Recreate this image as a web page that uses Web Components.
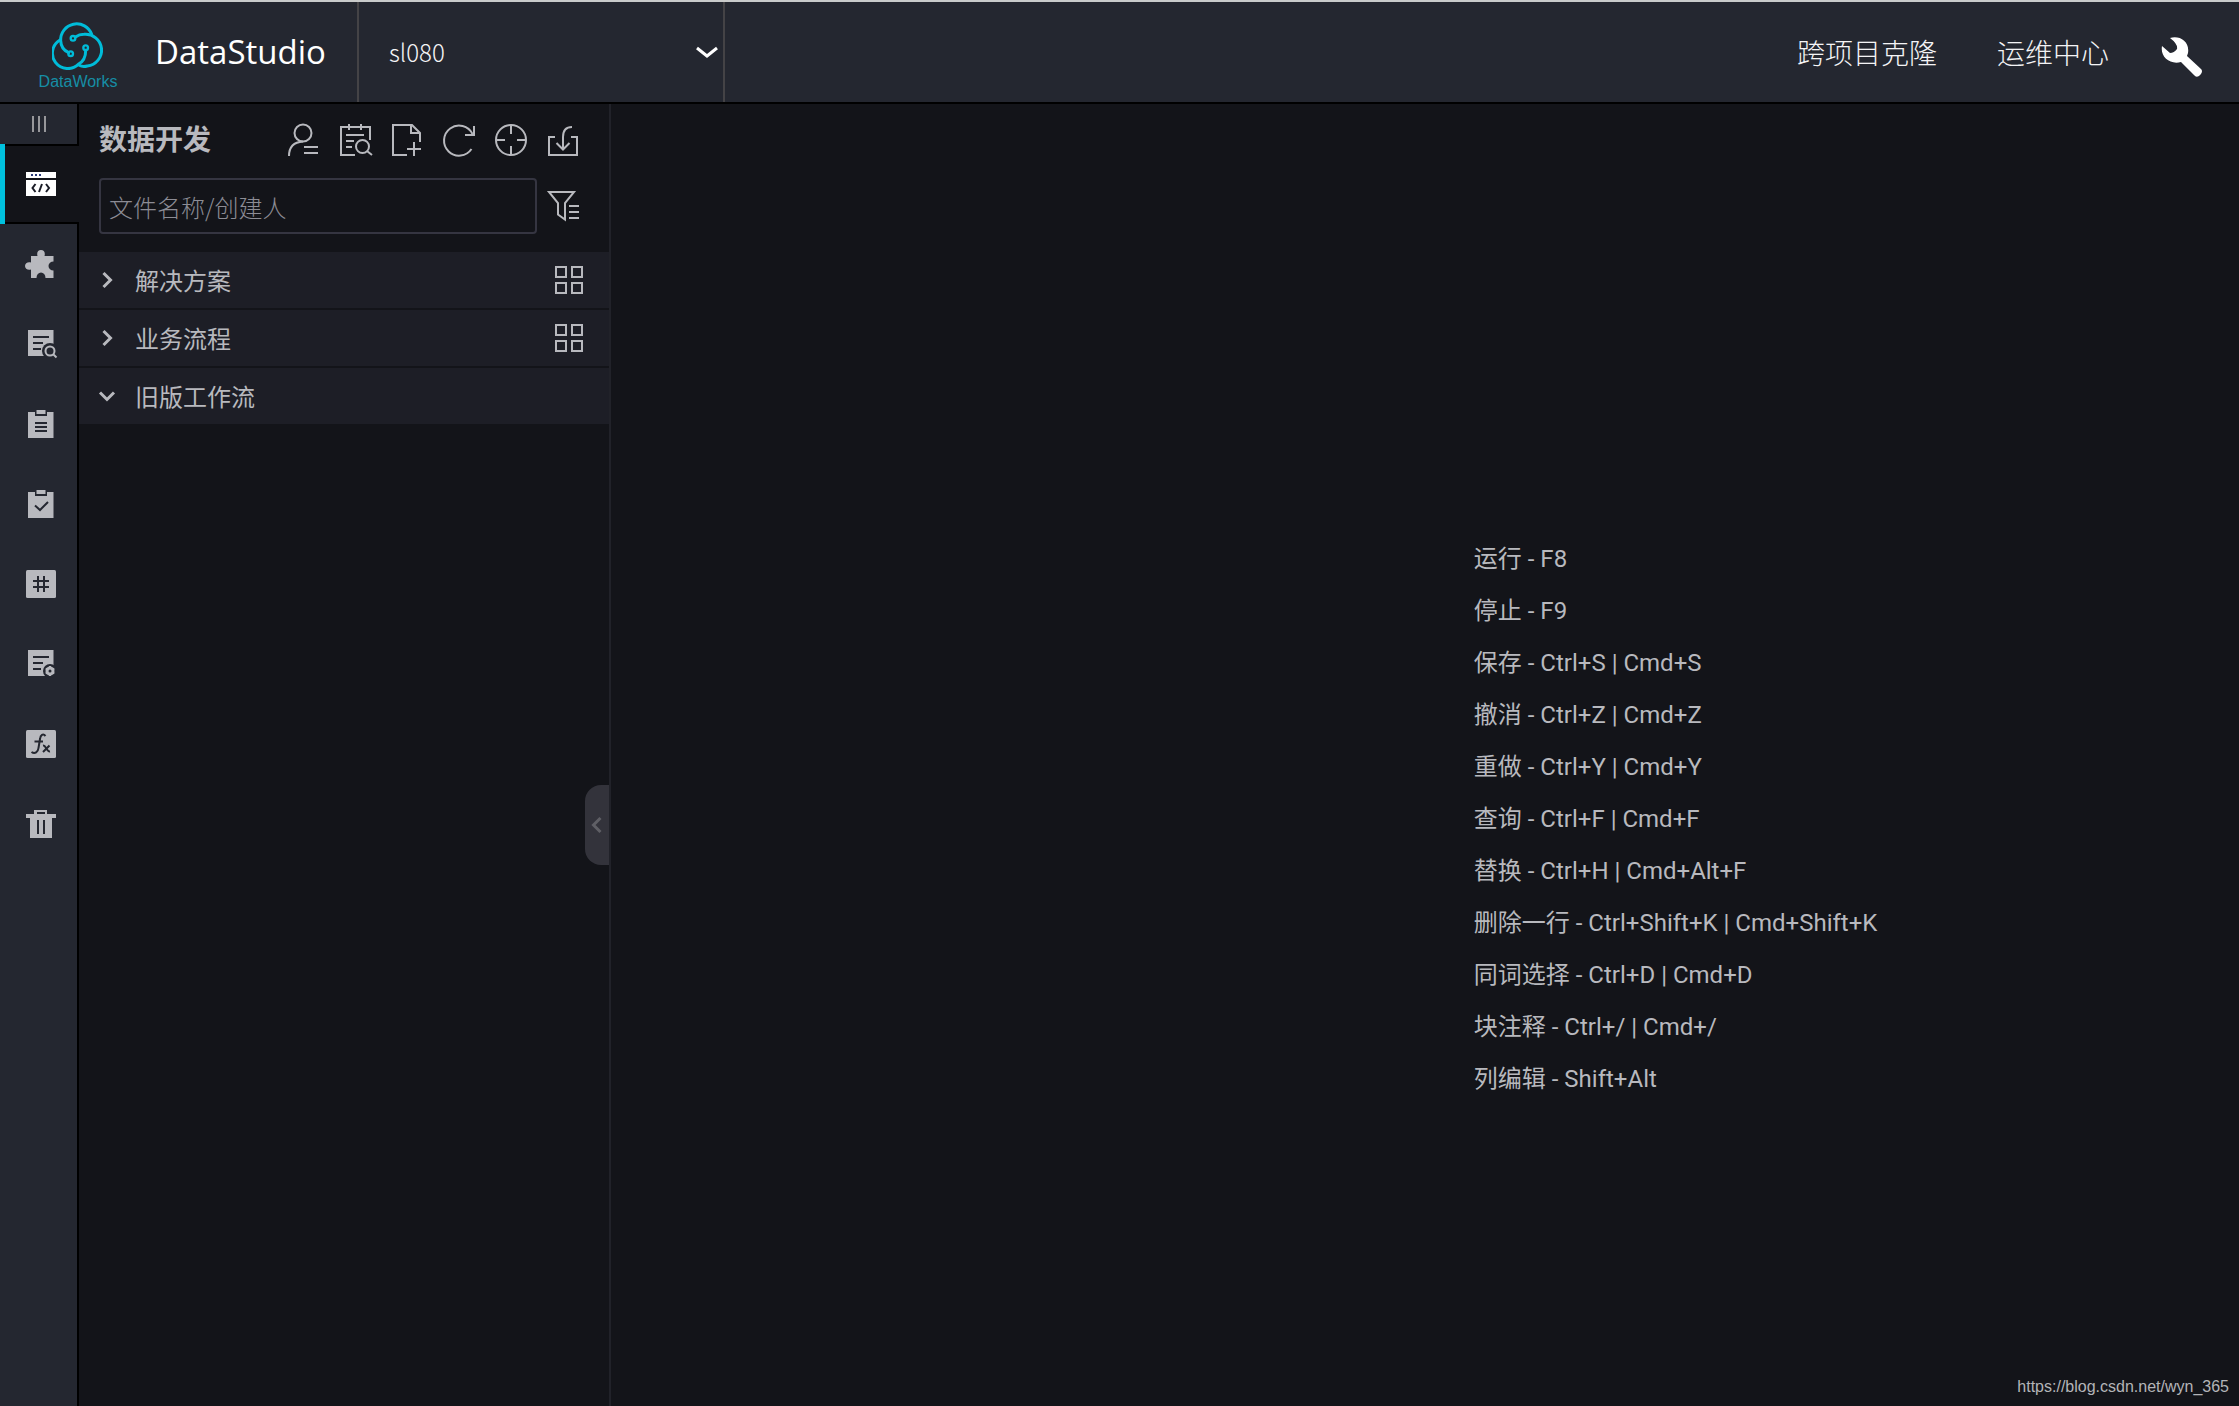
<!DOCTYPE html>
<html lang="zh-CN">
<head>
<meta charset="utf-8">
<title>DataStudio</title>
<style>
  html, body { margin: 0; background: #131419; }
  body {
    font-family: Roboto, "Noto Sans CJK SC", sans-serif;
    color: #b8b9be;
    --bar: #242730; --ground: #131419; --row: #1d1e26; --line: #000; --text: #b8b9be;
  }
</style>
</head>
<body>
<ds-app>
  <ds-header slot="header" product="DataStudio" project="sl080">
    <a href="#clone">跨项目克隆</a>
    <a href="#ops">运维中心</a>
  </ds-header>
  <ds-rail slot="rail">
    <ds-rail-item icon="code" label="数据开发" active></ds-rail-item>
    <ds-rail-item icon="puzzle" label="组件管理"></ds-rail-item>
    <ds-rail-item icon="docsearch" label="临时查询"></ds-rail-item>
    <ds-rail-item icon="clipboard" label="运行历史"></ds-rail-item>
    <ds-rail-item icon="check" label="手动业务流程"></ds-rail-item>
    <ds-rail-item icon="hash" label="公共表"></ds-rail-item>
    <ds-rail-item icon="docgear" label="表管理"></ds-rail-item>
    <ds-rail-item icon="fx" label="函数列表"></ds-rail-item>
    <ds-rail-item icon="trash" label="回收站"></ds-rail-item>
  </ds-rail>
  <ds-panel slot="panel" heading="数据开发">
    <ds-tree-row grid>解决方案</ds-tree-row>
    <ds-tree-row grid>业务流程</ds-tree-row>
    <ds-tree-row open>旧版工作流</ds-tree-row>
  </ds-panel>
  <ds-shortcuts>
    <ds-shortcut>运行 - F8</ds-shortcut>
    <ds-shortcut>停止 - F9</ds-shortcut>
    <ds-shortcut>保存 - Ctrl+S | Cmd+S</ds-shortcut>
    <ds-shortcut>撤消 - Ctrl+Z | Cmd+Z</ds-shortcut>
    <ds-shortcut>重做 - Ctrl+Y | Cmd+Y</ds-shortcut>
    <ds-shortcut>查询 - Ctrl+F | Cmd+F</ds-shortcut>
    <ds-shortcut>替换 - Ctrl+H | Cmd+Alt+F</ds-shortcut>
    <ds-shortcut>删除一行 - Ctrl+Shift+K | Cmd+Shift+K</ds-shortcut>
    <ds-shortcut>同词选择 - Ctrl+D | Cmd+D</ds-shortcut>
    <ds-shortcut>块注释 - Ctrl+/ | Cmd+/</ds-shortcut>
    <ds-shortcut>列编辑 - Shift+Alt</ds-shortcut>
  </ds-shortcuts>
  <span slot="credit">https://blog.csdn.net/wyn_365</span>
</ds-app>
<script>
const BG = '#242730';
const line = (d, w = 2) => `<path d="${d}" fill="none" stroke="currentColor" stroke-width="${w}"/>`;
const cut = (d, w = 2) => `<path d="${d}" fill="none" stroke="${BG}" stroke-width="${w}"/>`;
const ring = (x, y, r, w = 2) => `<circle cx="${x}" cy="${y}" r="${r}" fill="none" stroke="currentColor" stroke-width="${w}"/>`;
const hole = (x, y, r) => `<circle cx="${x}" cy="${y}" r="${r}" fill="${BG}"/>`;
const board = `<path d="M3 4H28.5V30H3Z" fill="currentColor"/><path d="M10 3H22V8H10Z" fill="${BG}"/><path d="M11.5 2H20.5V6H11.5Z" fill="currentColor"/>`;
const sheet = '<path d="M3 2H28.5V28H3Z" fill="currentColor"/>' + cut('M8 9H24M8 15H18M8 21H16');
const tile = '<rect x="1" y="2" width="30" height="28" rx="1.5" fill="currentColor"/>';
const ICONS = {
  user: line('M2 32C2 22 8 18 16 17.5M17 23H31M17 29H31') + ring(16, 9, 8.5),
  schedule: line('M16 31H2V3H31V16M10 0V6M22 0V6M7 11H25M7 17H15M7 23H13M28 27L33 31') + ring(23.5, 22.5, 6.5),
  newfile: line('M16 31H2V1H21L29 9V18M20 1V9H29M23 18V32M16 25H30'),
  refresh: line('M28.5 25A15 15 0 1 1 29.5 10M31 2V11H22'),
  target: line('M16 1V10M16 22V31M1 16H10M22 16H31') + ring(16, 16, 15),
  import: line('M8 13H2V31H30V13H24M25 3C19 3 16 7 16 13V25M9.5 19L16 25.5L22.5 19'),
  filter: line('M2 2H27L18 13V29.5L11 24.5V13ZM22 16H32M22 22H32M22 28H32'),
  code: '<path d="M1 4H31V10H1ZM1 12H31V28H1Z" fill="currentColor"/><path d="M6 6H8V8H6ZM10 6H12V8H10ZM14 6H16V8H14Z" fill="#2a3a78"/><path d="M10.5 16L7.5 20L10.5 24M17 16L14 24M21 16L24 20L21 24" fill="none" stroke="#1a1c26" stroke-width="2"/>',
  puzzle: '<path d="M6 8H12.5C11.5 4.5 13 2 16 2S20.5 4.5 19.5 8H28.5V13.5A5 4.5 0 0 0 28.5 22.5V30H20.5A4.5 5.5 0 0 0 11.5 30H6V21.5C3 22.5 0 21 0 18S3 13.5 6 14.5Z" fill="currentColor"/>',
  docsearch: sheet + hole(25, 23, 8) + ring(25, 23, 4.5) + line('M28 26L31.5 29.5'),
  clipboard: board + cut('M10 15H22M10 19H22M10 23H22'),
  check: board + cut('M10 17.5L15 22L23 14'),
  hash: tile + cut('M13 8V24M19 8V24M8 13H24M8 19H24'),
  docgear: sheet + hole(25, 23, 7) + ring(25, 23, 3, 3) + line('M25 18V28M20.7 20.5L29.3 25.5M20.7 25.5L29.3 20.5') + hole(25, 23, 1.5),
  fx: tile + cut('M20.5 8C18 5 15.5 7 15 11L13.5 20C13 24 10 26.5 6.5 24M9.5 13.5H18M18 17.5C21 17 21.5 24 25 23.5M24.5 17.5L18 24'),
  trash: '<path d="M1 6H9V2H22V6H31V10H27V30H5V10H1ZM12 4V6H20V4ZM12 12V26H14V12ZM18 12V26H20V12Z" fill="currentColor" fill-rule="evenodd"/>',
  grid: line('M3 3H13V13H3ZM19 3H29V13H19ZM3 19H13V29H3ZM19 19H29V29H19Z'),
  right: line('M12.5 9L19.5 16L12.5 23', 3),
  down: line('M9 12.5L16 19.5L23 12.5', 3),
  left: line('M19.5 9L12.5 16L19.5 23', 3),
  caret: line('M6 12L16 20L26 12', 3),
  bars: line('M10 8V24M16 8V24M22 8V24')
};

const BASE = `<style>
  :host,*{box-sizing:border-box}
  a,button,input,select{font:inherit;color:inherit}
  button{border:0;padding:0;margin:0;background:none;display:flex;align-items:center;justify-content:center;cursor:pointer}
</style>`;

const define = (name, markup) => {
  customElements.define(name, class extends HTMLElement {
    constructor() { super(); this.attachShadow({ mode: 'open' }); }
    connectedCallback() {
      if (this.shadowRoot.childNodes.length) return;
      const template = document.createElement('template');
      template.innerHTML = BASE + markup(this);
      this.shadowRoot.append(template.content.cloneNode(true));
    }
  });
};

define('ds-icon', el => `
  <style>:host{display:block;width:32px;height:32px;flex:none}svg{display:block;overflow:visible}</style>
  <svg width="32" height="32" viewBox="0 0 32 32" aria-hidden="true">${ICONS[el.getAttribute('name')]}</svg>`);

define('ds-logo', () => `
  <style>
    :host{display:flex;flex-direction:column;align-items:center;gap:2px;width:80px;height:80px;padding-top:8px;flex:none;color:#00bcd9}
    svg{display:block}
    span{font:16px/20px "Liberation Sans",sans-serif;color:#168ea5}
  </style>
  <svg width="52" height="50" viewBox="156 60 156 150" aria-hidden="true">
    <g fill="none" stroke="currentColor" stroke-width="9" stroke-linecap="round">
      <path d="M275 103A48 48 0 0 0 182 122Q183 148 206 158"/>
      <path d="M180 120A46 46 0 1 0 236 192Q257 180 257 152"/>
      <path d="M226 111Q238 103 252 103A47 47 0 0 1 262 198Q248 202 238 196"/>
      <g stroke-width="7"><circle cx="219" cy="115" r="7"/><circle cx="257" cy="143" r="7"/><circle cx="212" cy="161" r="7"/></g>
    </g>
  </svg>
  <span>DataWorks</span>`);

define('ds-header', el => `
  <style>
    :host{display:flex;height:104px;background:var(--bar);border-top:2px solid #c9cbcb;border-bottom:2px solid var(--line);color:#fff}
    .brand{display:flex;align-items:center;width:359px;padding-left:38px;gap:37px;border-right:2px solid #444346}
    h1{margin:0;font:400 33px/48px "Open Sans",sans-serif}
    label{display:grid;align-items:center;width:366px;border-right:2px solid #444346;font:300 24px/40px "Noto Sans CJK SC",sans-serif;color:#f4f4f6}
    select,label ds-icon{grid-area:1/1}
    select{appearance:none;width:100%;height:100%;border:0;background:none;padding:0 48px 0 30px;outline:0}
    option{background:#242730}
    label ds-icon{justify-self:end;pointer-events:none;color:#fff}
    nav{display:flex;align-items:center;gap:60px;margin-left:auto;padding-right:36px;font:300 28px/40px "Noto Sans CJK SC",sans-serif}
    ::slotted(a){color:#f4f4f6;text-decoration:none}
    button{margin-left:-8px;padding-top:10px}
    svg{display:block}
  </style>
  <div class="brand"><ds-logo></ds-logo><h1>${el.getAttribute('product')}</h1></div>
  <label><select aria-label="项目"><option>${el.getAttribute('project')}</option></select><ds-icon name="caret"></ds-icon></label>
  <nav>
    <slot></slot>
    <button aria-label="设置"><svg width="42" height="42" viewBox="0 0 42 42" aria-hidden="true"><path d="M9 2C18-1 29 5 27 17L26 20L40 33Q42 35 40 38L38 40Q35 42 33 39L20 26C9 29-1 21 1 10L9 17Q13 17 16 13Q17 8 9 2Z" fill="#fff"/></svg></button>
  </nav>`);

define('ds-rail', () => `
  <style>
    :host{display:block;width:79px;background:var(--bar);border-right:2px solid var(--line)}
    .fold{width:100%;height:40px;color:#97979a}
    nav{display:flex;flex-direction:column}
  </style>
  <button class="fold" aria-label="展开菜单"><ds-icon name="bars"></ds-icon></button>
  <nav><slot></slot></nav>`);

define('ds-rail-item', el => `
  <style>
    :host{display:block;position:relative;height:80px;color:var(--text)}
    :host([active]){margin-right:-2px;background:var(--ground);border:solid var(--line);border-width:2px 0;color:#fff}
    :host([active])::before{content:"";position:absolute;left:0;top:-2px;bottom:-2px;width:5px;background:#00c1de}
    button{width:77px;height:100%;padding-left:5px}
  </style>
  <button aria-label="${el.getAttribute('label')}" title="${el.getAttribute('label')}"><ds-icon name="${el.getAttribute('icon')}"></ds-icon></button>`);

define('ds-panel', el => `
  <style>
    :host{display:block;position:relative;width:532px;border-right:2px solid #212229}
    .head{display:flex;align-items:center;justify-content:space-between;height:72px;padding:0 30px 0 20px}
    h2{margin:0;padding-bottom:4px;font:700 28px/40px "Noto Sans CJK SC",sans-serif}
    .tools{display:flex;gap:20px}
    .search{display:flex;align-items:center;gap:10px;padding:2px 30px 18px 20px}
    input{flex:1;min-width:0;height:56px;padding:0 8px;background:none;border:2px solid #353541;border-radius:4px;outline:0;font:300 24px/32px "Noto Sans CJK SC",sans-serif}
    input::placeholder{color:#8c8c95;opacity:1}
    .tree{display:flex;flex-direction:column;gap:2px}
    .handle{position:absolute;right:0;top:681px;width:24px;height:80px;border-radius:16px 0 0 16px;background:#33333b;color:#5f5f65}
  </style>
  <div class="head"><h2>${el.getAttribute('heading')}</h2>
    <div class="tools">
      ${[['user', '负责人'], ['schedule', '调度查询'], ['newfile', '新建'], ['refresh', '刷新'], ['target', '定位'], ['import', '导入']].map(([n, l]) => `<button aria-label="${l}"><ds-icon name="${n}"></ds-icon></button>`).join('')}
    </div>
  </div>
  <div class="search"><input type="text" aria-label="搜索" placeholder="文件名称/创建人"><button aria-label="筛选"><ds-icon name="filter"></ds-icon></button></div>
  <div class="tree"><slot></slot></div>
  <button class="handle" aria-label="收起"><ds-icon name="left"></ds-icon></button>`);

define('ds-tree-row', el => `
  <style>
    :host{display:flex;align-items:center;justify-content:space-between;height:56px;padding:0 24px 0 12px;background:var(--row);font:24px/32px "Noto Sans CJK SC",sans-serif}
    .name{gap:12px}
  </style>
  <button class="name" aria-expanded="${el.hasAttribute('open')}"><ds-icon name="${el.hasAttribute('open') ? 'down' : 'right'}"></ds-icon><span><slot></slot></span></button>
  ${el.hasAttribute('grid') ? '<button aria-label="看板"><ds-icon name="grid"></ds-icon></button>' : ''}`);

define('ds-shortcuts', () => `
  <style>:host{display:block;padding:429px 0 0 53%}</style>
  <slot></slot>`);

define('ds-shortcut', () => `
  <style>:host{display:block;font-size:24px;line-height:52px;white-space:nowrap}</style>
  <slot></slot>`);

define('ds-app', () => `
  <style>
    :host{display:flex;flex-direction:column;min-height:100vh;background:var(--ground)}
    .body{display:flex;flex:1}
    main{flex:1;display:flex;flex-direction:column;justify-content:space-between;min-width:0}
    footer{align-self:flex-end;padding:0 10px 9px 0;font:16px/20px "Liberation Sans",sans-serif;color:#b4b5b8}
  </style>
  <slot name="header"></slot>
  <div class="body">
    <slot name="rail"></slot>
    <slot name="panel"></slot>
    <main><slot></slot><footer><slot name="credit"></slot></footer></main>
  </div>`);
</script>
</body>
</html>
